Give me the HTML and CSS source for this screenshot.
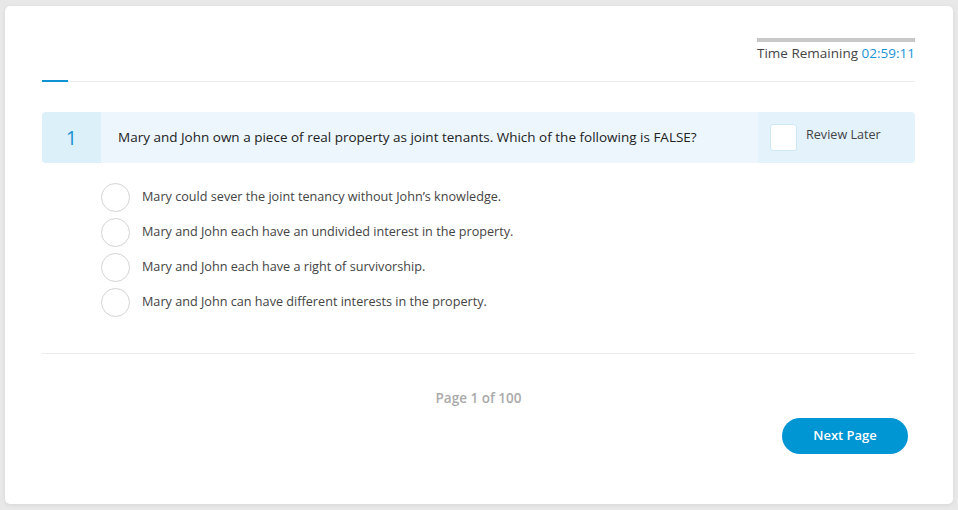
FILE: index.html
```html
<!DOCTYPE html>
<html lang="en">
<head>
  <meta charset="UTF-8">
  <title>Exam</title>
  <link rel="stylesheet" href="styles.css">
</head>
<body>
  <div class="card">
    <div class="timer">
      <div class="timer-bar"></div>
      <div class="timer-text">Time Remaining <span class="time">02:59:11</span></div>
    </div>
    <div class="tabs"><span class="tab-active"></span></div>

    <div class="question">
      <div class="q-num">1</div>
      <div class="q-text">Mary and John own a piece of real property as joint tenants. Which of the following is FALSE?</div>
      <label class="q-review"><span class="check"></span><span class="review-label">Review Later</span></label>
    </div>

    <ul class="answers">
      <li><span class="radio"></span><span class="answer-text">Mary could sever the joint tenancy without John’s knowledge.</span></li>
      <li><span class="radio"></span><span class="answer-text">Mary and John each have an undivided interest in the property.</span></li>
      <li><span class="radio"></span><span class="answer-text">Mary and John each have a right of survivorship.</span></li>
      <li><span class="radio"></span><span class="answer-text">Mary and John can have different interests in the property.</span></li>
    </ul>

    <div class="footer">
      <div class="pager">Page 1 of 100</div>
      <div class="actions"><button class="btn-next">Next Page</button></div>
    </div>
  </div>
</body>
</html>
```
FILE: styles.css
```css
html,body{
  margin: 0;
  padding: 0;
}
body{
  background-color: #e8e8e8;
  font-family: "Open Sans", "Liberation Sans", sans-serif;
  color: #333;
  padding: 6px 5px 6px 5px;
  height: 510px;
  box-sizing: border-box;
}
.card{
  background: #fff;
  border-radius: 5px;
  box-shadow: 0 1px 4px rgba(0,0,0,.08);
  height: 498px;
  width: 948px;
  box-sizing: border-box;
  padding: 32px 38px 0 37px;
}
.timer{
  display: flex;
  flex-direction: column;
  align-items: flex-end;
}
.timer-bar{
  width: 158px;
  height: 4px;
  background: #c8c8c8;
}
.timer-text{
  font-size: 13.5px;
  line-height: 22px;
  color: #444;
}
.time{
  color: #1a93d4;
}
.tabs{
  margin-top: 16px;
  border-bottom: 1px solid #ececec;
  height: 1px;
}
.tab-active{
  display: block;
  width: 26px;
  height: 2px;
  background: #0f93d2;
}
.question{
  margin-top: 30px;
  display: flex;
  height: 51px;
  border-radius: 4px;
  overflow: hidden;
  background: #ecf6fc;
}
.q-num{
  width: 59px;
  flex: none;
  background: #dcf0fa;
  color: #1a93d4;
  font-size: 20px;
  display: flex;
  align-items: center;
  justify-content: center;
}
.q-text{
  flex: 1;
  padding-left: 17px;
  padding-bottom: 2px;
  display: flex;
  align-items: center;
  font-size: 13.5px;
  color: #222;
}
.q-review{
  width: 157px;
  flex: none;
  background: #e3f2fb;
  display: flex;
  align-items: center;
  padding-left: 12px;
  box-sizing: border-box;
  font-size: 12.6px;
  color: #444;
}
.check{
  width: 25px;
  height: 25px;
  background: #fff;
  border: 1px solid #cde7f6;
  border-radius: 3px;
  margin-right: 9px;
}
.review-label{
  margin-bottom: 7px;
}
.answers{
  list-style: none;
  margin: 17px 0 0 0;
  padding: 0 0 0 59px;
}
.answers li{
  display: flex;
  align-items: center;
  height: 35px;
  font-size: 12.65px;
  color: #444;
}
.answer-text{
  margin-bottom: 3px;
}
.radio{
  width: 27px;
  height: 27px;
  border: 1px solid #d4d4d4;
  border-radius: 50%;
  margin-right: 12px;
  flex: none;
}
.footer{
  margin-top: 33px;
  border-top: 1px solid #ececec;
}
.pager{
  text-align: center;
  font-size: 13.5px;
  font-weight: 600;
  color: #aaa;
  margin-top: 34px;
  line-height: 20px;
}
.actions{
  display: flex;
  justify-content: flex-end;
  padding-right: 7px;
  margin-top: 10px;
}
.btn-next{
  width: 126px;
  height: 36px;
  border: none;
  border-radius: 18px;
  background: #0095d3;
  color: #fff;
  font-family: "Open Sans", "Liberation Sans", sans-serif;
  font-size: 13px;
  font-weight: 600;
  padding: 0 0 3px 0;
}
```
